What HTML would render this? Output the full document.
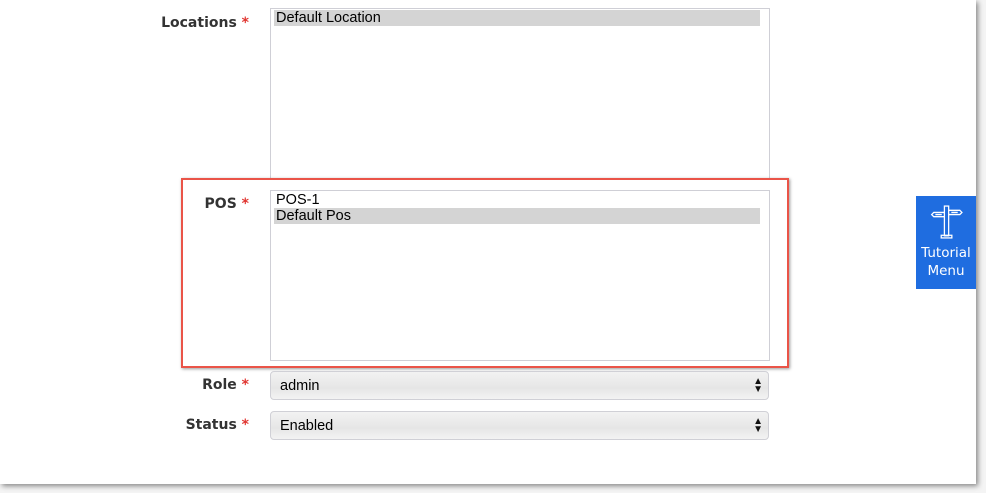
<!DOCTYPE html>
<html><head><style>
body{margin:0;width:986px;height:493px;background:#f4f4f4;position:relative;overflow:hidden;font-family:"Liberation Sans",sans-serif}
.page{position:absolute;left:0;top:0;width:976px;height:484px;background:#fff;box-shadow:2px 2px 5px rgba(0,0,0,.45)}
.lbl{position:absolute;right:727px;font-weight:bold;color:#333;font-family:"DejaVu Sans","Liberation Sans",sans-serif;font-size:14px}
.lbl b{color:#e0342f}
.box{position:absolute;left:270px;width:498px;border:1px solid #cfcfd6;background:#fff}
.opt{position:absolute;left:3px;width:484px;height:16px;font-size:14.5px;line-height:16px;padding-left:2px;color:#000}
.sel{background:#d4d4d4}
.select{position:absolute;left:270px;height:29px;border:1px solid #d0d0d6;border-radius:4px;background:linear-gradient(#f2f2f2,#e6e6e6 60%,#f3f3f3);font-size:14.5px;line-height:29px;padding-left:9px;box-sizing:border-box;width:499px}
.arr{position:absolute;right:5px;top:6px;font-size:10px;line-height:8px;color:#111}
.red{position:absolute;left:181px;top:178px;width:604px;height:186px;border:2px solid #ea5448;box-shadow:1px 1px 3px rgba(0,0,0,.4)}
.tut{position:absolute;left:916px;top:196px;width:60px;height:93px;background:#1f6de0;color:#fff;text-align:center;font-size:13.5px;line-height:18px;font-family:"DejaVu Sans",sans-serif}
</style></head><body>
<div class="page">
<div class="lbl" style="top:15px">Locations <b>*</b></div>
<div class="box" style="top:8px;height:170px;border-bottom:none"><div class="opt sel" style="top:1px">Default Location</div></div>
<div class="red"></div>
<div class="lbl" style="top:196px">POS <b>*</b></div>
<div class="box" style="top:190px;height:169px"><div class="opt" style="top:1px">POS-1</div><div class="opt sel" style="top:17px">Default Pos</div></div>
<div class="lbl" style="top:377px">Role <b>*</b></div>
<div class="select" style="top:371px">admin<div class="arr">▲<br>▼</div></div>
<div class="lbl" style="top:417px">Status <b>*</b></div>
<div class="select" style="top:411px">Enabled<div class="arr">▲<br>▼</div></div>
<div class="tut"><svg width="34" height="34" viewBox="0 0 32 32" style="position:absolute;left:13px;top:9px"><g fill="none" stroke="#fff" stroke-width="1.2"><rect x="14.5" y="1" width="4" height="28"/><rect x="11.5" y="28.5" width="10" height="2.5"/><path d="M14.5 7H4.5L2.5 9L4.5 11H14.5"/><path d="M18.5 5H29L31 7L29 9H18.5"/><path d="M6 9h6M21 7h6"/></g></svg><div style="position:absolute;left:0;right:0;top:48px">Tutorial<br>Menu</div></div>
</div>
</body></html>
